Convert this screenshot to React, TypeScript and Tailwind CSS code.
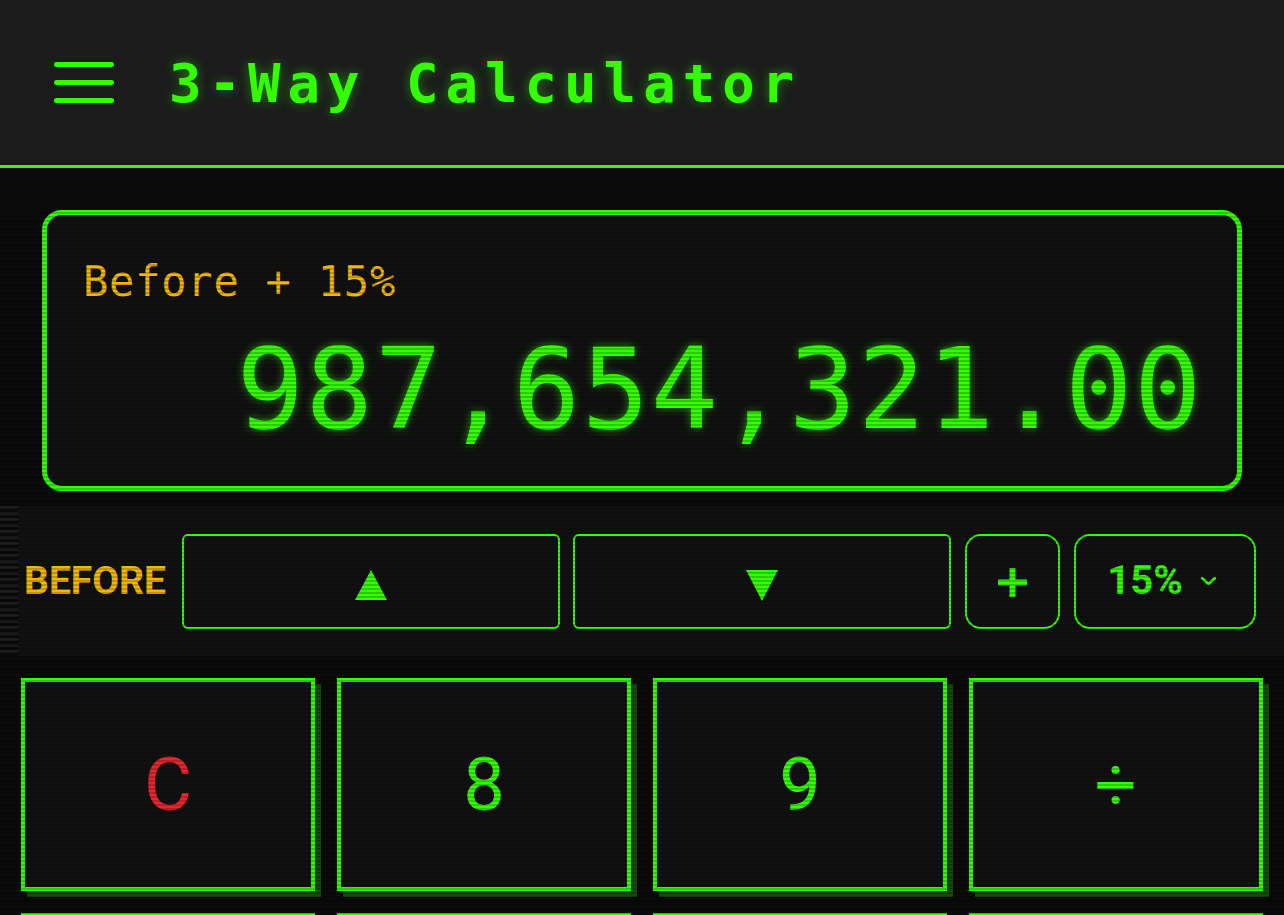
import React from 'react';

const MONO = "font-['DejaVu_Sans_Mono','Liberation_Mono',monospace]";
const SANS = "font-['Roboto','Liberation_Sans',sans-serif]";

type Key = { label: string; tone?: 'danger' | 'normal' };

const keys: Key[] = [
  { label: 'C', tone: 'danger' },
  { label: '8' },
  { label: '9' },
  { label: '÷' },
  { label: '7' },
  { label: '5' },
  { label: '6' },
  { label: '×' },
  { label: '4' },
  { label: '2' },
  { label: '3' },
  { label: '−' },
];

function Header() {
  return (
    <header className="flex h-[168px] items-center border-b-[3px] border-[#33ff00] bg-[#1b1b1b] pl-[54px]">
      <button className="flex w-[60px] flex-col gap-[13px]" aria-label="Menu">
        <span className="h-[5px] w-full rounded-full bg-[#33ff00]" />
        <span className="h-[5px] w-full rounded-full bg-[#33ff00]" />
        <span className="h-[5px] w-full rounded-full bg-[#33ff00]" />
      </button>
      <h1
        className={`${MONO} ml-[55px] mt-[2px] text-[54px] font-bold leading-none tracking-[7px] text-[#33ff00] [text-shadow:0_0_12px_rgba(51,255,0,0.45)]`}
      >
        3-Way Calculator
      </h1>
    </header>
  );
}

function Display() {
  return (
    <div className="mx-[42px] mt-[42px] rounded-[20px] border-[5px] border-[#33ff00] bg-[#111111] pb-[41px] pl-[36px] pr-[34px] pt-[46px]">
      <div className={`${MONO} text-[42px] leading-none tracking-[0.8px] text-[#f2b705]`}>Before + 15%</div>
      <div
        className={`${MONO} mt-[30px] text-right text-[112px] leading-none tracking-[1.6px] text-[#33ff00] [text-shadow:0_0_8px_rgba(51,255,0,0.6)]`}
      >
        987,654,321.00
      </div>
    </div>
  );
}

function Toolbar() {
  return (
    <div className="mt-[15px] flex h-[150px] items-center bg-[#111111] pr-[28px]">
      <div className="h-full w-[18px] bg-[repeating-linear-gradient(to_bottom,#1d1d1d_0_3px,#0a0a0a_3px_6px)]" />
      <span className={`${SANS} ml-[6px] text-[39px] font-bold leading-none text-[#f2b705]`}>BEFORE</span>
      <button className="ml-[16px] flex h-[95px] flex-1 items-center justify-center rounded-[6px] border-2 border-[#33ff00]">
        <svg width="32" height="30" viewBox="0 0 32 30" className="mt-[8px]">
          <polygon points="16,0 32,30 0,30" fill="#33ff00" />
        </svg>
      </button>
      <button className="ml-[13px] flex h-[95px] flex-1 items-center justify-center rounded-[6px] border-2 border-[#33ff00]">
        <svg width="32" height="31" viewBox="0 0 32 31" className="mt-[8px]">
          <polygon points="0,0 32,0 16,31" fill="#33ff00" />
        </svg>
      </button>
      <button className="ml-[14px] flex h-[95px] w-[95px] items-center justify-center rounded-[16px] border-2 border-[#33ff00]">
        <svg width="29" height="29" viewBox="0 0 29 29" className="mt-[2px]">
          <rect x="11.5" y="0" width="6" height="29" fill="#33ff00" />
          <rect x="0" y="11.5" width="29" height="6" fill="#33ff00" />
        </svg>
      </button>
      <button className="ml-[14px] flex h-[95px] w-[182px] items-center justify-center gap-[17px] rounded-[16px] border-2 border-[#33ff00] pr-[6px]">
        <span className={`${SANS} text-[40px] font-bold leading-none text-[#33ff00]`}>15%</span>
        <svg width="17" height="10" viewBox="0 0 17 10">
          <path d="M2 2 L8.5 8 L15 2" fill="none" stroke="#33ff00" strokeWidth="2.5" strokeLinecap="round" strokeLinejoin="round" />
        </svg>
      </button>
    </div>
  );
}

function Keypad() {
  return (
    <div className="grid grid-cols-4 gap-x-[22px] gap-y-[22px] px-[21px] pb-[40px] pt-[22px]">
      {keys.map((k) => (
        <button
          key={k.label}
          className={`${SANS} flex h-[213px] items-center justify-center border-4 border-[#33ff00] bg-[#111111] text-[74px] leading-none shadow-[6px_6px_0_#174a0c] ${
            k.tone === 'danger' ? 'text-[#e8262d]' : 'text-[#33ff00]'
          }`}
        >
          {k.label}
        </button>
      ))}
    </div>
  );
}

export default function App() {
  return (
    <div className="min-h-screen bg-[#0a0a0a]">
      <Header />
      <main className="relative">
        <Display />
        <Toolbar />
        <Keypad />
        {/* CRT scanlines over the calculator body */}
        <div className="pointer-events-none absolute inset-0 bg-[repeating-linear-gradient(to_bottom,transparent_0_2px,rgba(0,0,0,0.2)_2px_4px)]" />
      </main>
    </div>
  );
}
